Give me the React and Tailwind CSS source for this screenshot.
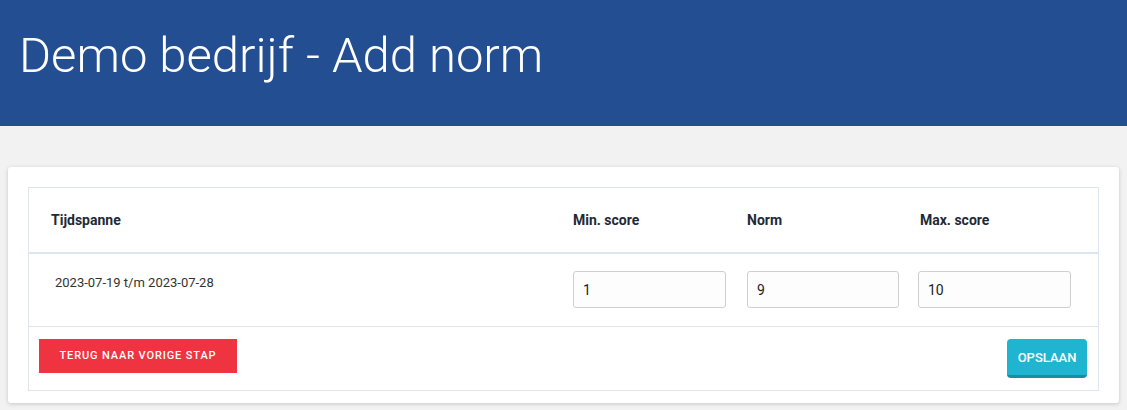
export default function App() {
  return (
    <div className="min-h-[410px] bg-[#f2f2f2] font-['Roboto',sans-serif]">
      <header className="h-[126px] bg-[#234e91] pl-[19px] pt-[26px]">
        <h1 className="text-[49px] font-light leading-[60px] text-white">
          Demo bedrijf - Add norm
        </h1>
      </header>

      <div className="px-[8px] pt-[41px]">
        <div className="rounded-[3px] bg-white px-[20px] pb-[12px] pt-[20px] shadow-[0_1px_4px_rgba(0,0,0,0.18)]">
          <div className="border border-[#dde6ef]">
            <div className="grid h-[66px] grid-cols-[522px_174px_173px_1fr] items-center border-b-2 border-[#dde6ef] text-[14px] font-bold text-[#1e2a38]">
              <div className="pl-[22px]">Tijdspanne</div>
              <div className="pl-[22px]">Min. score</div>
              <div className="pl-[22px]">Norm</div>
              <div className="pl-[22px]">Max. score</div>
            </div>

            <div className="grid h-[73px] grid-cols-[522px_174px_173px_1fr] border-b border-[#dde6ef]">
              <div className="pl-[26px] pt-[19px] text-[13px] text-[#333]">
                2023-07-19 t/m 2023-07-28
              </div>
              <div className="pl-[22px] pt-[17px]">
                <input
                  defaultValue="1"
                  className="h-[37px] w-[153px] rounded-[3px] border border-[#cfcfcf] bg-[#fdfdfd] px-[9px] text-[14px] text-[#222] outline-none"
                />
              </div>
              <div className="pl-[22px] pt-[17px]">
                <input
                  defaultValue="9"
                  className="h-[37px] w-[152px] rounded-[3px] border border-[#cfcfcf] bg-[#fdfdfd] px-[9px] text-[14px] text-[#222] outline-none"
                />
              </div>
              <div className="pl-[20px] pt-[17px]">
                <input
                  defaultValue="10"
                  className="h-[37px] w-[153px] rounded-[3px] border border-[#cfcfcf] bg-[#fdfdfd] px-[9px] text-[14px] text-[#222] outline-none"
                />
              </div>
            </div>

            <div className="flex h-[63px] items-start justify-between pl-[10px] pr-[11px] pt-[12px]">
              <button
                type="button"
                className="h-[34px] w-[198px] bg-[#ef3340] text-[11px] font-medium tracking-[0.08em] text-white"
              >
                TERUG NAAR VORIGE STAP
              </button>
              <button
                type="button"
                className="h-[39px] w-[80px] rounded-[4px] border-b-[3px] border-[#168ea6] bg-[#1fb5d0] pt-[2px] text-[13px] font-medium text-white"
              >
                OPSLAAN
              </button>
            </div>
          </div>
        </div>
      </div>
    </div>
  );
}
